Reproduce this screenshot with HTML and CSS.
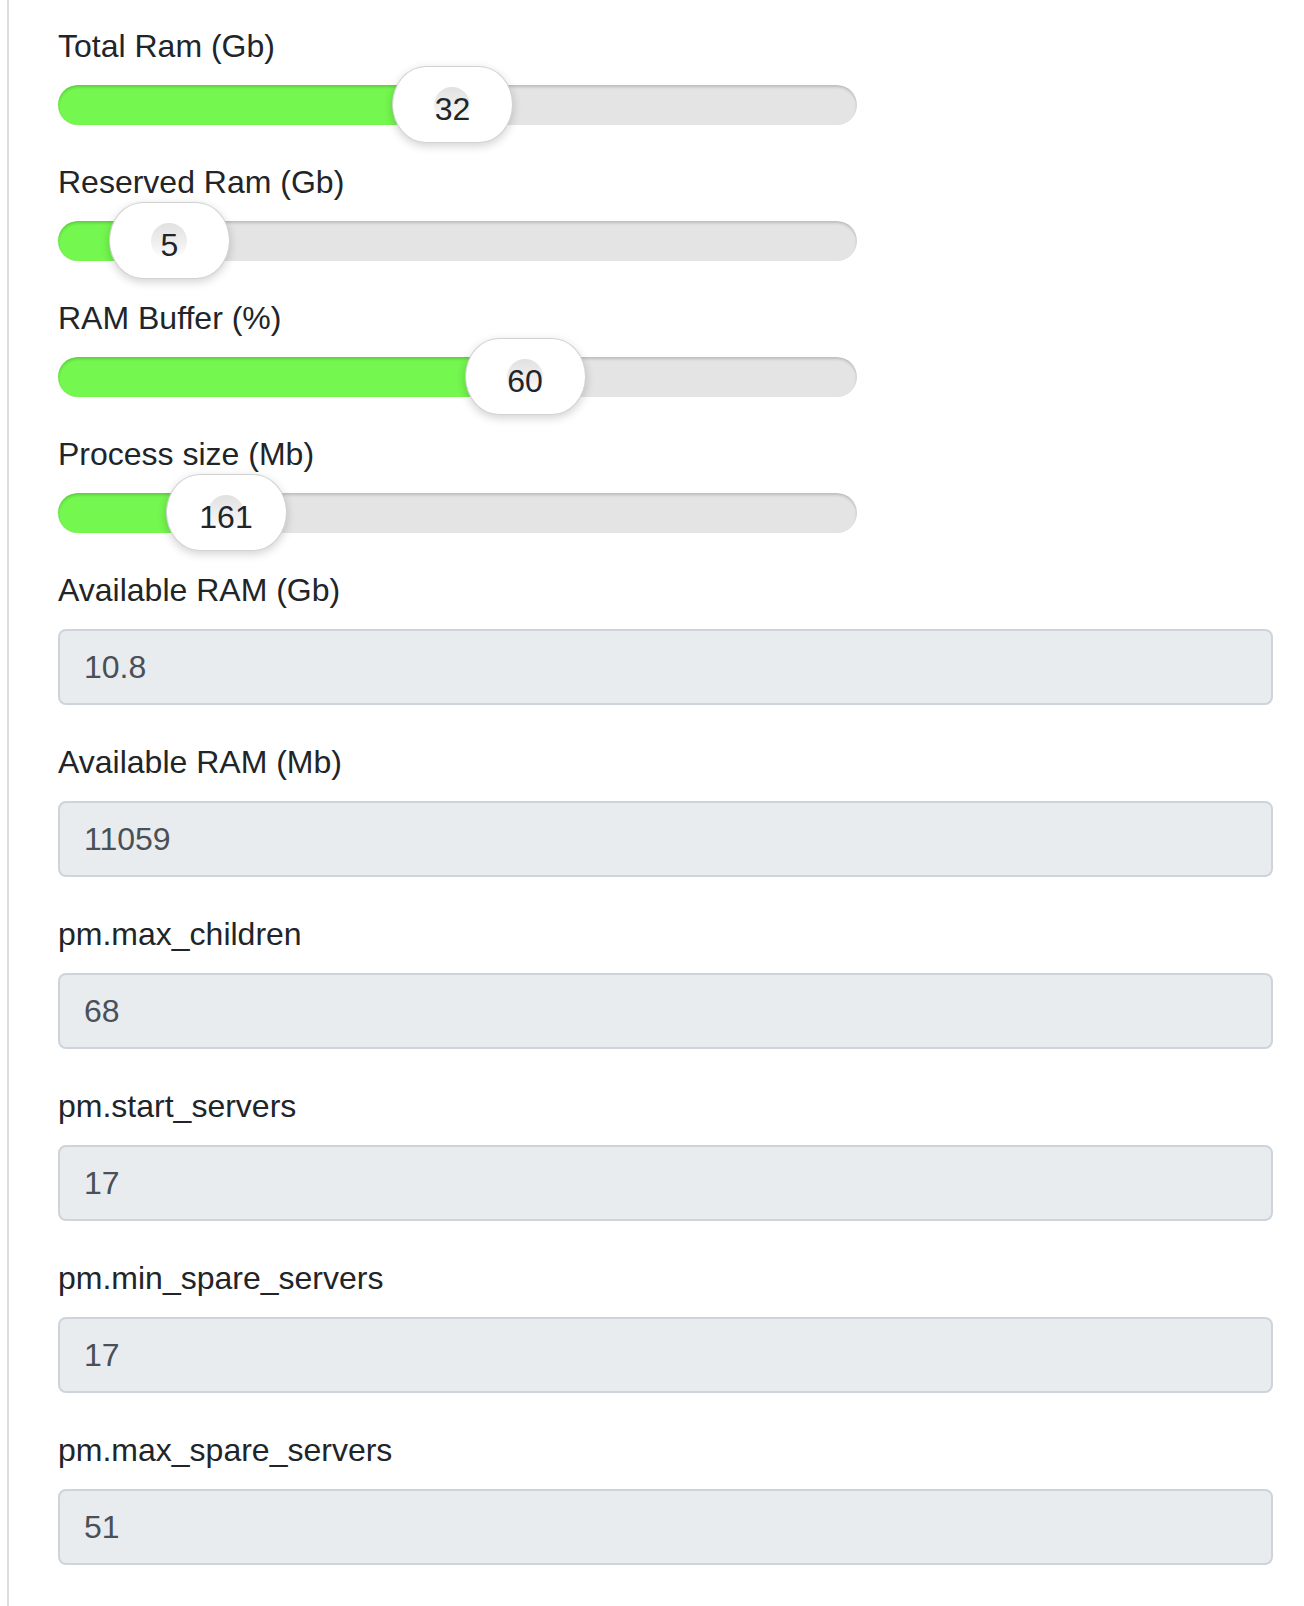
FILE: index.html
```html
<!DOCTYPE html>
<html>
<head>
<meta charset="utf-8">
<link rel="stylesheet" href="styles.css">
</head>
<body>
<div class="page">
  <div class="form">
    <div class="field">
      <label class="label">Total Ram (Gb)</label>
      <div class="range" style="--p:0.4926">
        <div class="track"><div class="fill"></div></div>
        <div class="thumb"><span class="bubble">32</span></div>
      </div>
    </div>
    <div class="field">
      <label class="label">Reserved Ram (Gb)</label>
      <div class="range" style="--p:0.0752">
        <div class="track"><div class="fill"></div></div>
        <div class="thumb"><span class="bubble">5</span></div>
      </div>
    </div>
    <div class="field">
      <label class="label">RAM Buffer (%)</label>
      <div class="range" style="--p:0.5996">
        <div class="track"><div class="fill"></div></div>
        <div class="thumb"><span class="bubble">60</span></div>
      </div>
    </div>
    <div class="field">
      <label class="label">Process size (Mb)</label>
      <div class="range" style="--p:0.1586">
        <div class="track"><div class="fill"></div></div>
        <div class="thumb"><span class="bubble">161</span></div>
      </div>
    </div>

    <div class="group">
      <label class="label">Available RAM (Gb)</label>
      <input class="control" type="text" value="10.8" readonly>
    </div>
    <div class="group">
      <label class="label">Available RAM (Mb)</label>
      <input class="control" type="text" value="11059" readonly>
    </div>
    <div class="group">
      <label class="label">pm.max_children</label>
      <input class="control" type="text" value="68" readonly>
    </div>
    <div class="group">
      <label class="label">pm.start_servers</label>
      <input class="control" type="text" value="17" readonly>
    </div>
    <div class="group">
      <label class="label">pm.min_spare_servers</label>
      <input class="control" type="text" value="17" readonly>
    </div>
    <div class="group">
      <label class="label">pm.max_spare_servers</label>
      <input class="control" type="text" value="51" readonly>
    </div>
  </div>
</div>
</body>
</html>
```

FILE: styles.css
```css
* {
  box-sizing: border-box;
}

html, body {
  margin: 0;
  padding: 0;
  background: #fff;
}

body {
  font-family: "Liberation Sans", Arial, sans-serif;
  font-size: 32px;
  line-height: 48px;
  color: #212529;
}

.page {
  margin-left: 7px;
  border-left: 2px solid #dcdcdc;
  min-height: 1606px;
  padding: 21px 31px 0 49px;
}

.form {
  display: flex;
  flex-direction: column;
}

.label {
  display: block;
  padding-top: 1px;
  margin-bottom: 15px;
  font-size: 32px;
  line-height: 48px;
  color: #212529;
}

.field {
  margin-bottom: 32px;
}

.range {
  position: relative;
  width: 799px;
  height: 40px;
}

.track {
  position: relative;
  height: 40px;
  border-radius: 20px;
  background: #e4e4e4;
  overflow: hidden;
}

.track::after {
  content: "";
  position: absolute;
  inset: 0;
  border-radius: 20px;
  box-shadow: inset 0 2px 3px rgba(0, 0, 0, 0.18);
}

.fill {
  height: 100%;
  width: calc((100% - 121px) * var(--p) + 60px);
  background: #74f74f;
}

.thumb {
  position: absolute;
  top: -19px;
  left: calc((100% - 121px) * var(--p));
  width: 121px;
  height: 77px;
  border-radius: 34px / 38.5px;
  background: #fff;
  border: 1px solid #d2d2d2;
  box-shadow: 0 3px 10px rgba(0, 0, 0, 0.18);
  display: flex;
  align-items: center;
  justify-content: center;
}

.bubble {
  position: relative;
  isolation: isolate;
  display: block;
  font-size: 32px;
  line-height: 36px;
  color: #212529;
  margin-top: 8px;
  text-align: center;
}

.bubble::before {
  content: "";
  position: absolute;
  left: 50%;
  top: -4px;
  width: 36px;
  height: 36px;
  margin-left: -18px;
  border-radius: 50%;
  background: linear-gradient(#e1e1e1, #f2f2f2 65%, #fff);
  z-index: -1;
}

.group {
  margin-bottom: 32px;
}

.control {
  display: block;
  width: 100%;
  height: 76px;
  padding: 0 24px;
  font-family: "Liberation Sans", Arial, sans-serif;
  font-size: 32px;
  line-height: 48px;
  color: #495057;
  background: #e9ecef;
  border: 2px solid #ced4da;
  border-radius: 8px;
  outline: none;
}
```
